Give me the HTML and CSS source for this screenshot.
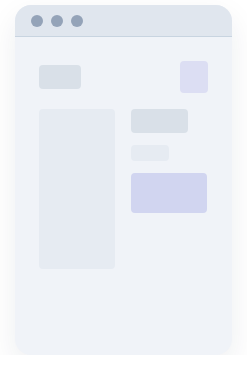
FILE: index.html
```html
<!DOCTYPE html>
<html lang="en">
<head>
  <meta charset="UTF-8">
  <meta name="viewport" content="width=device-width, initial-scale=1.0">
  <title>Page skeleton</title>
  <link rel="stylesheet" href="styles.css">
</head>
<body>
  <div class="browser-window">
    <div class="title-bar">
      <div class="dot"></div>
      <div class="dot"></div>
      <div class="dot"></div>
    </div>

    <div class="page">
      <div class="top-row">
        <div class="block logo-block"></div>
        <div class="block avatar-block"></div>
      </div>

      <div class="main-grid">
        <div class="block sidebar-block"></div>
        <div class="content-col">
          <div class="block heading-block"></div>
          <div class="block line-block"></div>
          <div class="block card-block"></div>
        </div>
      </div>
    </div>
  </div>
</body>
</html>
```

FILE: styles.css
```css
body {
  margin: 0;
  padding: 5px 0 0 15px;
  background-color: #ffffff;
  font-family: 'Inter', sans-serif;
}

.browser-window {
  width: 217px;
  height: 350px;
  border-radius: 16px;
  overflow: hidden;
  background-color: #f0f3f8;
  box-shadow: 0 12px 30px rgba(30, 41, 59, 0.08);
  display: flex;
  flex-direction: column;
}

.title-bar {
  height: 32px;
  flex-shrink: 0;
  box-sizing: border-box;
  background-color: #e0e6ee;
  border-bottom: 1px solid #c8d4e0;
  display: flex;
  align-items: center;
  gap: 8px;
  padding: 0 0 0 16px;
}

.dot {
  width: 12px;
  height: 12px;
  border-radius: 50%;
  background-color: #94a3b8;
}

.page {
  padding: 24px;
  display: flex;
  flex-direction: column;
  gap: 16px;
}

.top-row {
  display: flex;
  justify-content: space-between;
  align-items: center;
}

.block {
  border-radius: 4px;
}

.logo-block {
  width: 42px;
  height: 24px;
  background-color: #d9e0e8;
}

.avatar-block {
  width: 28px;
  height: 32px;
  background-color: #dcdef3;
}

.main-grid {
  display: grid;
  grid-template-columns: 76px 76px;
  gap: 16px;
}

.sidebar-block {
  height: 160px;
  background-color: #e6ebf2;
}

.content-col {
  display: flex;
  flex-direction: column;
  gap: 12px;
}

.heading-block {
  width: 57px;
  height: 24px;
  background-color: #d9e0e8;
}

.line-block {
  width: 38px;
  height: 16px;
  background-color: #e6ebf2;
}

.card-block {
  width: 76px;
  height: 40px;
  background-color: #d1d5f0;
}
```
